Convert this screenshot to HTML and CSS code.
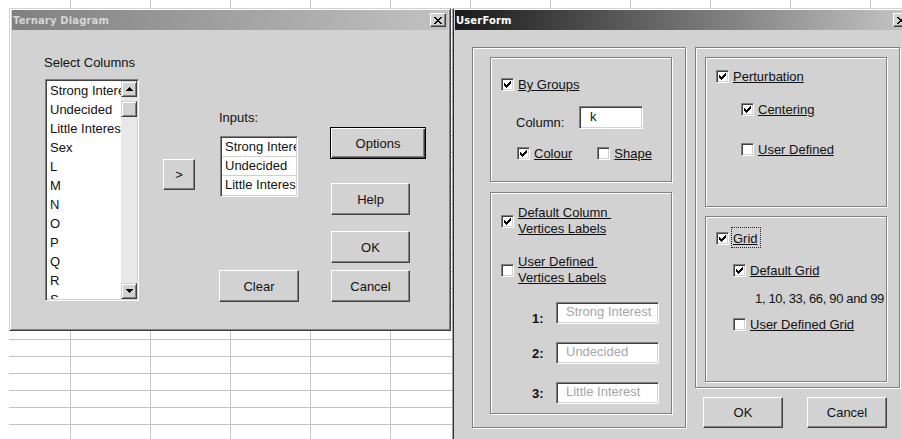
FILE: index.html
```html
<!DOCTYPE html>
<html lang="en">
<head>
<meta charset="utf-8">
<title>Ternary Diagram</title>
<link rel="stylesheet" href="styles.css">
</head>
<body>
<div class="desktop">

  <section class="window ternary">
    <header class="titlebar inactive">
      <span class="title">Ternary Diagram</span>
      <span class="close"><svg width="8" height="7" viewBox="0 0 8 7" shape-rendering="crispEdges"><path d="M0 0h2v1H0zM6 0h2v1H6zM1 1h2v1H1zM5 1h2v1H5zM2 2h4v1H2zM3 3h2v1H3zM2 4h4v1H2zM1 5h2v1H1zM5 5h2v1H5zM0 6h2v1H0zM6 6h2v1H6z"/></svg></span>
    </header>
    <div class="ternary-body">
      <div class="col col-select">
        <div class="lbl">Select Columns</div>
        <div class="listbox columns-list">
          <ul class="items">
            <li>Strong Interest</li>
            <li>Undecided</li>
            <li>Little Interest</li>
            <li>Sex</li>
            <li>L</li>
            <li>M</li>
            <li>N</li>
            <li>O</li>
            <li>P</li>
            <li>Q</li>
            <li>R</li>
            <li>S</li>
          </ul>
          <div class="vscroll">
            <span class="sb-btn"><svg width="7" height="4" viewBox="0 0 7 4" shape-rendering="crispEdges"><path d="M3 0h1v1H3zM2 1h3v1H2zM1 2h5v1H1zM0 3h7v1H0z"/></svg></span>
            <span class="sb-thumb"></span>
            <span class="sb-btn sb-down"><svg width="7" height="4" viewBox="0 0 7 4" shape-rendering="crispEdges"><path d="M0 0h7v1H0zM1 1h5v1H1zM2 2h3v1H2zM3 3h1v1H3z"/></svg></span>
          </div>
        </div>
      </div>

      <div class="col col-add">
        <button class="btn btn-add">&gt;</button>
      </div>

      <div class="col col-inputs">
        <div class="lbl">Inputs:</div>
        <ul class="listbox inputs-list">
          <li>Strong Interest</li>
          <li>Undecided</li>
          <li>Little Interest</li>
        </ul>
        <button class="btn btn-clear">Clear</button>
      </div>

      <div class="col col-actions">
        <button class="btn btn-default btn-options">Options</button>
        <button class="btn btn-help">Help</button>
        <button class="btn btn-ok">OK</button>
        <button class="btn btn-cancel">Cancel</button>
      </div>
    </div>
  </section>

  <section class="window userform">
    <header class="titlebar active">
      <span class="title">UserForm</span>
      <span class="close"><svg width="8" height="7" viewBox="0 0 8 7" shape-rendering="crispEdges"><path d="M0 0h2v1H0zM6 0h2v1H6zM1 1h2v1H1zM5 1h2v1H5zM2 2h4v1H2zM3 3h2v1H3zM2 4h4v1H2zM1 5h2v1H1zM5 5h2v1H5zM0 6h2v1H0zM6 6h2v1H6z"/></svg></span>
    </header>
    <div class="uf-body">
      <div class="frame frame-left">
        <div class="frame frame-groups">
          <div class="opt opt-bygroups">
            <span class="chk on"><svg class="tick" width="7" height="7" viewBox="0 0 7 7" shape-rendering="crispEdges"><path d="M6 0h1v1H6zM5 1h2v1H5zM0 2h1v1H0zM4 2h3v1H4zM0 3h2v1H0zM3 3h3v1H3zM0 4h5v1H0zM1 5h3v1H1zM2 6h1v1H2z"/></svg></span>
            <span class="u">By Groups</span>
          </div>
          <div class="column-row">
            <span class="column-lbl">Column:</span>
            <span class="textbox column-box">k</span>
          </div>
          <div class="opt-row">
            <div class="opt">
              <span class="chk on"><svg class="tick" width="7" height="7" viewBox="0 0 7 7" shape-rendering="crispEdges"><path d="M6 0h1v1H6zM5 1h2v1H5zM0 2h1v1H0zM4 2h3v1H4zM0 3h2v1H0zM3 3h3v1H3zM0 4h5v1H0zM1 5h3v1H1zM2 6h1v1H2z"/></svg></span>
              <span class="u">Colour</span>
            </div>
            <div class="opt opt-shape">
              <span class="chk"></span>
              <span class="u">Shape</span>
            </div>
          </div>
        </div>

        <div class="frame frame-labels">
          <div class="opt two-line opt-defaultcol">
            <span class="chk on"><svg class="tick" width="7" height="7" viewBox="0 0 7 7" shape-rendering="crispEdges"><path d="M6 0h1v1H6zM5 1h2v1H5zM0 2h1v1H0zM4 2h3v1H4zM0 3h2v1H0zM3 3h3v1H3zM0 4h5v1H0zM1 5h3v1H1zM2 6h1v1H2z"/></svg></span>
            <span class="u">Default Column&nbsp;<br>Vertices Labels</span>
          </div>
          <div class="opt two-line opt-userlabels">
            <span class="chk"></span>
            <span class="u">User Defined&nbsp;<br>Vertices Labels</span>
          </div>
          <div class="vertex-row first">
            <span class="num low">1:</span>
            <span class="textbox muted">Strong Interest</span>
          </div>
          <div class="vertex-row">
            <span class="num">2:</span>
            <span class="textbox muted">Undecided</span>
          </div>
          <div class="vertex-row">
            <span class="num">3:</span>
            <span class="textbox muted">Little Interest</span>
          </div>
        </div>
      </div>

      <div class="uf-right">
        <div class="frame frame-right">
          <div class="frame frame-perturb">
            <div class="opt opt-perturb">
              <span class="chk on"><svg class="tick" width="7" height="7" viewBox="0 0 7 7" shape-rendering="crispEdges"><path d="M6 0h1v1H6zM5 1h2v1H5zM0 2h1v1H0zM4 2h3v1H4zM0 3h2v1H0zM3 3h3v1H3zM0 4h5v1H0zM1 5h3v1H1zM2 6h1v1H2z"/></svg></span>
              <span class="u">Perturbation</span>
            </div>
            <div class="opt opt-centering">
              <span class="chk on"><svg class="tick" width="7" height="7" viewBox="0 0 7 7" shape-rendering="crispEdges"><path d="M6 0h1v1H6zM5 1h2v1H5zM0 2h1v1H0zM4 2h3v1H4zM0 3h2v1H0zM3 3h3v1H3zM0 4h5v1H0zM1 5h3v1H1zM2 6h1v1H2z"/></svg></span>
              <span class="u">Centering</span>
            </div>
            <div class="opt opt-userdef">
              <span class="chk"></span>
              <span class="u">User Defined</span>
            </div>
          </div>

          <div class="frame frame-grid">
            <div class="opt opt-grid">
              <span class="chk on"><svg class="tick" width="7" height="7" viewBox="0 0 7 7" shape-rendering="crispEdges"><path d="M6 0h1v1H6zM5 1h2v1H5zM0 2h1v1H0zM4 2h3v1H4zM0 3h2v1H0zM3 3h3v1H3zM0 4h5v1H0zM1 5h3v1H1zM2 6h1v1H2z"/></svg></span>
              <span class="u focus">Grid</span>
            </div>
            <div class="opt opt-defaultgrid">
              <span class="chk on"><svg class="tick" width="7" height="7" viewBox="0 0 7 7" shape-rendering="crispEdges"><path d="M6 0h1v1H6zM5 1h2v1H5zM0 2h1v1H0zM4 2h3v1H4zM0 3h2v1H0zM3 3h3v1H3zM0 4h5v1H0zM1 5h3v1H1zM2 6h1v1H2z"/></svg></span>
              <span class="u">Default Grid</span>
            </div>
            <div class="grid-values">1, 10, 33, 66, 90 and 99</div>
            <div class="opt opt-usergrid">
              <span class="chk"></span>
              <span class="u">User Defined Grid</span>
            </div>
          </div>
        </div>
        <div class="uf-buttons">
          <button class="btn btn-uf">OK</button>
          <button class="btn btn-uf">Cancel</button>
        </div>
      </div>
    </div>
  </section>

</div>
</body>
</html>
```

FILE: styles.css
```css
* { box-sizing: border-box; }

html, body { margin: 0; padding: 0; }

body {
  width: 902px;
  height: 439px;
  overflow: hidden;
  background: #fff;
  font-family: "Liberation Sans", Arial, sans-serif;
  font-size: 13px;
  line-height: 15px;
  color: #111;
}

ul { list-style: none; margin: 0; padding: 0; }

/* worksheet behind the dialogs */
.desktop {
  position: relative;
  height: 439px;
  margin-left: 9px;
  background-color: #fff;
  background-image:
    linear-gradient(to right, #c8c8c8 1px, transparent 1px),
    linear-gradient(to bottom, #c2c2c2 1px, transparent 1px);
  background-size: 80px 100%, 100% 17px;
  background-position: 61px 0, 0 16px;
}

/* classic 3D window */
.window {
  position: absolute;
  display: flex;
  flex-direction: column;
  overflow: hidden;
  background: #d2d2d2;
  border: 1px solid;
  border-color: #d2d2d2 #404040 #404040 #d2d2d2;
  box-shadow: inset 1px 1px #fff, inset -1px -1px #808080;
  padding: 1px 2px 2px 2px;
}

.ternary { left: 0; top: 8px; width: 442px; height: 323px; }

.userform {
  left: 443px;
  top: 8px;
  width: 462px;
  height: 450px;
  border-left-color: #a0a0a0;
  box-shadow: inset 1px 0 #303030, inset 0 1px #fff;
}

.titlebar {
  flex: none;
  height: 20px;
  display: flex;
  align-items: center;
  justify-content: space-between;
  padding: 0 2px 0 1px;
}

.titlebar.inactive {
  background: linear-gradient(to right, #808080, #c2c2c2);
  color: #d6d6d6;
}

.titlebar.active {
  background: linear-gradient(to right, #1a1a1a, #c6c6c6);
  color: #fff;
}

.title {
  font-family: "DejaVu Sans", Verdana, sans-serif;
  font-weight: bold;
  font-size: 10px;
  letter-spacing: 0.15px;
  white-space: nowrap;
}

.close {
  width: 16px;
  height: 14px;
  display: flex;
  align-items: center;
  justify-content: center;
  background: #d2d2d2;
  border: 1px solid;
  border-color: #fff #404040 #404040 #fff;
  box-shadow: inset -1px -1px #808080;
}

.close svg { fill: #000; }

/* buttons */
.btn {
  font: inherit;
  color: #111;
  margin: 0;
  padding: 0;
  display: flex;
  align-items: center;
  justify-content: center;
  background: #d2d2d2;
  border: 1px solid;
  border-color: #fff #404040 #404040 #fff;
  box-shadow: inset -1px -1px #808080;
}

.btn-default {
  border-color: #000;
  box-shadow: inset 1px 1px #fff, inset -1px -1px #404040, inset -2px -2px #808080;
}

/* ---- Ternary Diagram dialog ---- */
.ternary-body {
  flex: 1;
  display: flex;
  align-items: flex-start;
  padding-left: 32px;
}

.col { display: flex; flex-direction: column; align-items: flex-start; }

.col-select { margin-top: 25px; }

.listbox {
  background: #fff;
  border: 1px solid;
  border-color: #808080 #fff #fff #808080;
  box-shadow: inset 1px 1px #404040, inset -1px -1px #d2d2d2;
  padding: 1px;
}

.columns-list {
  margin-top: 9px;
  margin-left: 1px;
  width: 94px;
  height: 222px;
  display: flex;
}

.columns-list .items {
  flex: 1;
  min-width: 0;
  overflow: hidden;
}

.columns-list li,
.inputs-list li {
  white-space: nowrap;
  overflow: hidden;
  padding-left: 3px;
}

.columns-list li { height: 19px; line-height: 19px; }

.vscroll {
  flex: none;
  width: 16px;
  display: flex;
  flex-direction: column;
  background: #e8e8e8;
}

.sb-btn,
.sb-thumb {
  width: 16px;
  height: 16px;
  display: flex;
  align-items: center;
  justify-content: center;
  background: #d2d2d2;
  border: 1px solid;
  border-color: #d2d2d2 #404040 #404040 #d2d2d2;
  box-shadow: inset 1px 1px #fff, inset -1px -1px #808080;
}

.sb-btn svg { fill: #000; }
.sb-thumb { margin-top: 4px; }
.sb-down { margin-top: auto; }

.col-add { margin-left: 24px; margin-top: 129px; }
.btn-add { width: 32px; height: 31px; }

.col-inputs { margin-left: 24px; margin-top: 80px; }

.inputs-list {
  margin-top: 11px;
  margin-left: 1px;
  width: 78px;
  height: 61px;
}

.inputs-list li {
  height: 19px;
  line-height: 18px;
  border-bottom: 1px solid #cfcfcf;
}

.inputs-list li:last-child { border-bottom: 0; }

.btn-clear { margin-top: 73px; width: 80px; height: 32px; }

.col-actions { margin-left: 31px; margin-top: 97px; }
.btn-options { width: 96px; height: 32px; }
.btn-help { margin-top: 24px; margin-left: 1px; width: 79px; height: 32px; }
.btn-ok { margin-top: 16px; margin-left: 1px; width: 79px; height: 32px; }
.btn-cancel { margin-top: 7px; margin-left: 1px; width: 79px; height: 32px; }

/* ---- UserForm ---- */
.uf-body {
  flex: 1;
  display: flex;
  align-items: flex-start;
  padding: 17px 0 0 17px;
}

.frame {
  border: 1px solid #808080;
  box-shadow: inset 1px 1px #fff, 1px 1px #fff;
  display: flex;
  flex-direction: column;
  align-items: flex-start;
}

.frame-left {
  width: 214px;
  height: 381px;
  padding: 9px 0 0 17px;
  gap: 10px;
}

.frame-groups { width: 182px; height: 125px; flex: none; }
.frame-labels { width: 182px; height: 222px; flex: none; }

.uf-right { margin-left: 9px; display: flex; flex-direction: column; }

.frame-right {
  width: 205px;
  height: 341px;
  padding: 9px 0 0 9px;
  gap: 9px;
}

.frame-perturb { width: 182px; height: 150px; flex: none; }
.frame-grid { width: 182px; height: 166px; flex: none; }

.uf-buttons {
  display: flex;
  gap: 24px;
  margin-top: 9px;
  padding-left: 8px;
}

.btn-uf { width: 80px; height: 31px; }

/* checkbox + label */
.opt {
  display: flex;
  align-items: center;
  gap: 4px;
  white-space: nowrap;
}

.opt .u { text-decoration: underline; text-underline-offset: 1px; }

.chk {
  flex: none;
  width: 13px;
  height: 13px;
  display: flex;
  align-items: center;
  justify-content: center;
  background: #fff;
  border: 1px solid;
  border-color: #808080 #fff #fff #808080;
  box-shadow: inset 1px 1px #404040, inset -1px -1px #d2d2d2;
}

.tick { fill: #000; }

.two-line .u { line-height: 16px; }

.focus {
  border: 1px dotted #222;
  padding: 3px 2px 1px 1px;
  margin: -4px -3px -2px -2px;
}

.opt-bygroups { margin: 19px 0 0 10px; }

.column-row { display: flex; margin: 14px 0 0 25px; }
.column-lbl { width: 63px; margin-top: 9px; }

.textbox {
  display: block;
  background: #fff;
  border: 1px solid;
  border-color: #808080 #fff #fff #808080;
  box-shadow: inset 1px 1px #404040, inset -1px -1px #d2d2d2;
  white-space: nowrap;
  overflow: hidden;
}

.column-box { width: 64px; height: 23px; padding: 2px 0 0 10px; }

.opt-row { display: flex; margin: 16px 0 0 26px; }
.opt-shape { margin-left: 25px; }

.opt-defaultcol { margin: 12px 0 0 10px; }
.opt-userlabels { margin: 17px 0 0 10px; }

.vertex-row {
  display: flex;
  align-items: center;
  height: 22px;
  margin: 18px 0 0 41px;
}

.vertex-row.first { margin-top: 16px; }

.num { width: 24px; font-weight: bold; }
.num.low { align-self: flex-end; margin-bottom: -2px; }

.textbox.muted {
  width: 103px;
  height: 22px;
  line-height: 18px;
  padding-left: 9px;
  color: #a6a6a6;
}

.opt-perturb { margin: 11px 0 0 10px; }
.opt-centering { margin: 18px 0 0 35px; }
.opt-userdef { margin: 25px 0 0 35px; }

.opt-grid { margin: 14px 0 0 10px; }
.opt-defaultgrid { margin: 17px 0 0 27px; }
.grid-values { margin: 13px 0 0 49px; letter-spacing: -0.35px; white-space: nowrap; }
.opt-usergrid { margin: 11px 0 0 27px; }
```
